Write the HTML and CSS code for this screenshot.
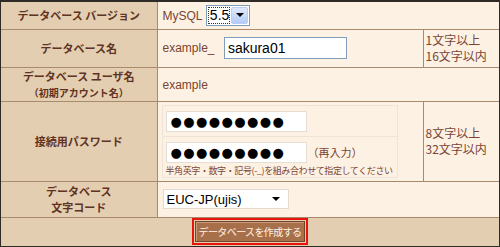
FILE: index.html
```html
<!DOCTYPE html>
<html lang="ja">
<head>
  <meta charset="UTF-8" />
  <title>データベース作成</title>
  <link rel="stylesheet" href="styles.css">
</head>
<body>
  <div class="frame">
    <table class="dbform">
      <colgroup>
        <col class="col-label">
        <col class="col-value">
        <col class="col-note">
      </colgroup>
      <tr class="row-version">
        <th>データベース バージョン</th>
        <td colspan="2">
          <span class="plain">MySQL</span>
          <span class="xp-select">
            <span class="xp-value">5.5</span>
            <span class="xp-btn"><span class="tri"></span></span>
          </span>
        </td>
      </tr>
      <tr class="row-name">
        <th>データベース名</th>
        <td>
          <span class="plain">example_</span>
          <input class="txt" type="text" value="sakura01">
        </td>
        <td class="note">1文字以上<br>16文字以内</td>
      </tr>
      <tr class="row-user">
        <th>データベース ユーザ名<br><span class="sub">（初期アカウント名）</span></th>
        <td colspan="2"><span class="plain">example</span></td>
      </tr>
      <tr class="row-pass">
        <th>接続用パスワード</th>
        <td>
          <div class="inner">
            <div class="inner-cell">
              <span class="pw">●●●●●●●●●</span>
            </div>
            <div class="inner-cell second">
              <span class="pw">●●●●●●●●●</span><span class="again">（再入力）</span>
              <div class="hint">半角英字・数字・記号(-_)を組み合わせて指定してください</div>
            </div>
          </div>
        </td>
        <td class="note">8文字以上<br>32文字以内</td>
      </tr>
      <tr class="row-charset">
        <th>データベース<br>文字コード</th>
        <td colspan="2">
          <span class="charset">EUC-JP(ujis)<span class="tri"></span></span>
        </td>
      </tr>
      <tr class="row-submit">
        <td colspan="3" class="submit-cell">
          <div class="submit-wrap">
            <span class="focus-ring"><button type="button" class="btn">データベースを作成する</button></span>
          </div>
        </td>
      </tr>
    </table>
  </div>
</body>
</html>
```

FILE: styles.css
```css
body {
  margin: 0;
  background-color: #fdf1e4;
  font-family: "Liberation Sans", "Noto Sans CJK JP", sans-serif;
}

.frame {
  width: 500px;
  height: 247px;
  box-sizing: border-box;
  border: 1px solid #2e2a26;
  border-top-width: 2px;
  overflow: hidden;
}

.dbform {
  width: 100%;
  border-collapse: collapse;
  border-style: hidden;
  table-layout: fixed;
}

.col-label { width: 156px; }
.col-value { width: 266px; }

.dbform th,
.dbform td {
  border: 1px solid #a88b6d;
  padding: 0;
}

.dbform th {
  background-color: #e4ceb1;
  color: #5e3323;
  font-family: "Noto Sans CJK JP", sans-serif;
  font-size: 11px;
  font-weight: bold;
  line-height: 16px;
  text-align: center;
}

.dbform td {
  background-color: #fdf1e4;
  color: #7a4533;
  font-size: 12px;
  padding-left: 5px;
}

.row-version { height: 27px; }
.row-name { height: 38px; }
.row-user { height: 34px; }
.row-pass { height: 80px; }
.row-charset { height: 36px; }
.row-submit { height: 30px; }

.sub {
  font-size: 10px;
}

.plain {
  vertical-align: middle;
}

.xp-select {
  display: inline-flex;
  vertical-align: middle;
  margin-left: 0;
  width: 44px;
  height: 21px;
  box-sizing: border-box;
  border: 1px solid #7f9db9;
  background: #fff;
  padding: 1px;
}

.xp-value {
  flex: 1;
  border: 1px dotted #333;
  font-size: 14px;
  line-height: 15px;
  color: #000;
  padding-left: 1px;
}

.xp-btn {
  width: 16px;
  margin-left: 1px;
  border: 1px solid #b9cdf6;
  border-radius: 2px;
  background: linear-gradient(#dfe9fe, #b5cbf6);
  display: flex;
  align-items: center;
  justify-content: center;
}

.tri {
  width: 0;
  height: 0;
  border-left: 4px solid transparent;
  border-right: 4px solid transparent;
  border-top: 4px solid #000;
}

.txt {
  vertical-align: middle;
  margin-left: 6px;
  width: 123px;
  height: 22px;
  box-sizing: border-box;
  border: 1px solid #7f9db9;
  padding: 0 3px;
  font-family: "Liberation Sans", sans-serif;
  font-size: 14px;
  color: #000;
}

.note {
  font-family: "Noto Sans CJK JP", sans-serif;
  font-size: 11px;
  line-height: 16px;
  vertical-align: middle;
  padding-left: 2px !important;
  white-space: nowrap;
}

.inner {
  margin-right: 25px;
  border: 1px solid #efe4d6;
  margin-left: -1px;
}

.inner-cell {
  padding: 5px 3px 4px 3px;
  border-bottom: 1px solid #efe4d6;
}

.inner-cell.second {
  border-bottom: none;
  padding-bottom: 1px;
}

.pw {
  display: inline-block;
  vertical-align: middle;
  width: 141px;
  height: 21px;
  box-sizing: border-box;
  border: 1px solid #e6ded4;
  background: #fff;
  color: #000;
  font-family: "DejaVu Sans", sans-serif;
  font-size: 13px;
  line-height: 19px;
  letter-spacing: 1.4px;
  padding-left: 4px;
  overflow: hidden;
  white-space: nowrap;
}

.again {
  vertical-align: middle;
  font-family: "Noto Sans CJK JP", sans-serif;
  font-size: 11px;
  margin-left: 1px;
}

.hint {
  font-family: "Noto Sans CJK JP", sans-serif;
  font-size: 9px;
  line-height: 11px;
  letter-spacing: -0.4px;
  margin-top: 2px;
  white-space: nowrap;
}

.charset {
  display: inline-flex;
  align-items: center;
  justify-content: space-between;
  vertical-align: middle;
  width: 126px;
  height: 20px;
  box-sizing: border-box;
  border: 1px solid #e3dbd2;
  background: #fff;
  color: #000;
  font-size: 13px;
  padding: 0 8px 0 3px;
}

.submit-cell {
  vertical-align: top;
  background-color: #e4ceb1 !important;
  padding-left: 0 !important;
}

.submit-wrap {
  display: flex;
  justify-content: center;
}

.focus-ring {
  display: block;
  border: 2px solid #e8140c;
  padding: 1px;
}

.btn {
  display: block;
  width: 110px;
  height: 21px;
  border: 1px solid #6f4427;
  box-shadow: inset 1px 1px 0 #c99a77;
  background-color: #a8704a;
  color: #fff3e6;
  font-family: "Noto Sans CJK JP", sans-serif;
  font-size: 10px;
  letter-spacing: -0.6px;
  white-space: nowrap;
  padding: 0;
  cursor: pointer;
}
```
